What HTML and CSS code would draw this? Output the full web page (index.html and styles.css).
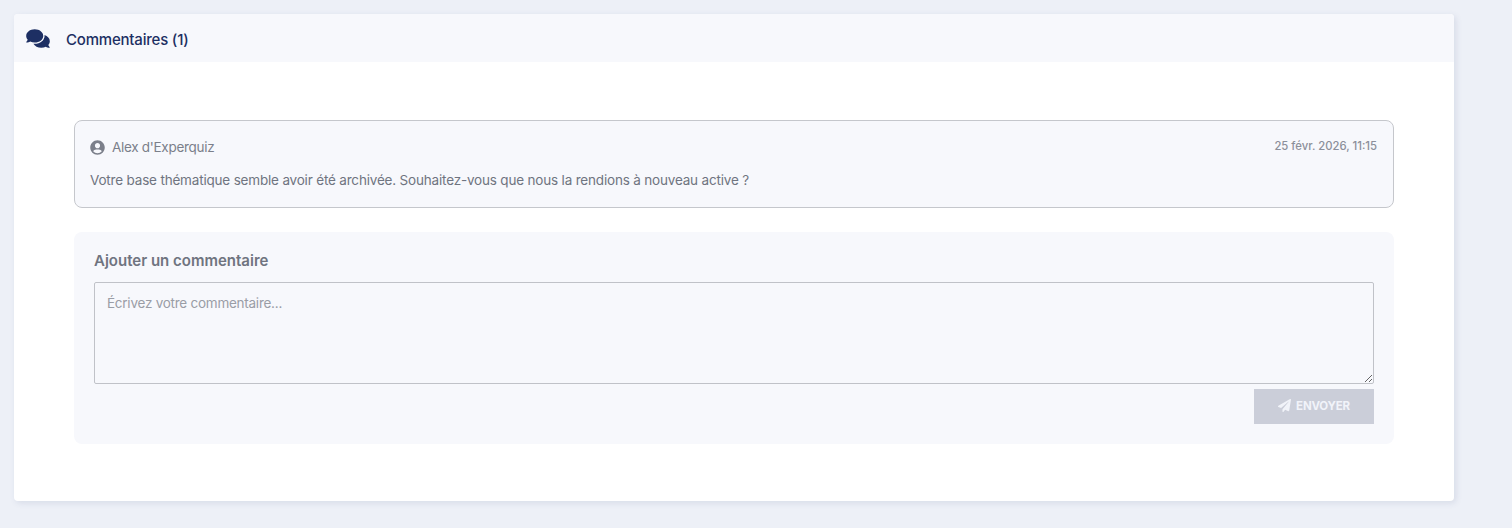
FILE: index.html
```html
<!DOCTYPE html>
<html lang="fr">
<head>
<meta charset="utf-8">
<title>Commentaires</title>
<link rel="stylesheet" href="styles.css">
</head>
<body>
<section class="card">
  <header class="card-head">
    <svg class="icon-comments" viewBox="0 0 576 512"><path d="M416 192c0-88.4-93.1-160-208-160S0 103.6 0 192c0 34.3 14.1 65.9 38 92-13.4 30.2-35.5 54.2-35.8 54.5-2.2 2.3-2.8 5.7-1.5 8.7S4.8 352 8 352c36.6 0 66.9-12.3 88.7-25 32.2 15.7 70.3 25 111.3 25 114.9 0 208-71.6 208-160zm122 220c23.9-26 38-57.7 38-92 0-66.9-53.5-124.2-129.3-148.1.9 6.6 1.3 13.3 1.3 20.1 0 105.9-107.7 192-240 192-10.8 0-21.3-.8-31.7-1.9C207.8 439.6 281.8 480 368 480c41 0 79.1-9.2 111.3-25 21.8 12.7 52.1 25 88.7 25 3.2 0 6.1-1.9 7.3-4.8 1.3-2.9.7-6.3-1.5-8.7-.3-.3-22.4-24.2-35.8-54.5z"/></svg>
    <h2 class="card-title">Commentaires (1)</h2>
  </header>
  <div class="card-body">
    <article class="comment">
      <div class="comment-meta">
        <span class="author">
          <svg class="icon-user" viewBox="0 0 496 512"><path d="M248 8C111 8 0 119 0 256s111 248 248 248 248-111 248-248S385 8 248 8zm0 96c48.6 0 88 39.4 88 88s-39.4 88-88 88-88-39.4-88-88 39.4-88 88-88zm0 344c-58.7 0-111.3-26.6-146.5-68.2 18.8-35.4 55.6-59.8 98.5-59.8 2.4 0 4.8.4 7.1 1.1 13 4.2 26.6 6.9 40.9 6.9 14.3 0 28-2.7 40.9-6.9 2.3-.7 4.7-1.1 7.1-1.1 42.9 0 79.7 24.4 98.5 59.8C359.3 421.4 306.7 448 248 448z"/></svg>
          Alex d'Experquiz
        </span>
        <time class="date">25 févr. 2026, 11:15</time>
      </div>
      <p class="comment-text">Votre base thématique semble avoir été archivée. Souhaitez-vous que nous la rendions à nouveau active ?</p>
    </article>
    <form class="add-form">
      <h3 class="add-title">Ajouter un commentaire</h3>
      <textarea class="add-input" placeholder="Écrivez votre commentaire..."></textarea>
      <div class="add-actions">
        <button class="send" type="button" disabled>
          <svg class="icon-send" viewBox="0 0 512 512"><path d="M476 3.2L12.5 270.6c-18.1 10.4-15.8 35.6 2.2 43.2L121 358.4l287.3-253.2c5.5-4.9 13.3 2.6 8.6 8.3L176 407v80.5c0 23.6 28.5 32.9 42.5 15.8L282 426l124.6 52.2c14.2 6 30.4-2.9 33-18.2l72-432C515 7.8 493.3-6.8 476 3.2z"/></svg>
          <span class="send-label">ENVOYER</span>
        </button>
      </div>
    </form>
  </div>
</section>
</body>
</html>
```
FILE: styles.css
```css
* { box-sizing: border-box; }
html, body { height: 100%; }
body {
  margin: 0;
  padding: 14px 58px 27px 14px;
  background: #edf0f7;
  font-family: Inter, "Liberation Sans", sans-serif;
  color: #6f7480;
  overflow: hidden;
}
.card {
  background: #fff;
  border-radius: 4px;
  box-shadow: 2px 2px 6px rgba(60, 75, 120, 0.12);
  height: 487px;
  overflow: hidden;
}
.card-head {
  height: 48px;
  background: #f7f8fc;
  display: flex;
  align-items: center;
  padding: 1px 0 0 12px;
}
.icon-comments { width: 24px; height: 21px; fill: #1d2f63; }
.card-title {
  margin: 2px 0 0 16px;
  font-size: 15px;
  letter-spacing: -0.2px;
  font-weight: 500;
  color: #1d2f63;
}
.card-body { padding: 58px 60px 0; }
.comment {
  height: 88px;
  background: #f7f8fc;
  border: 1px solid #c5c7cc;
  border-radius: 8px;
  padding: 16px 16px 0 15px;
}
.comment-meta { display: flex; justify-content: space-between; align-items: flex-start; }
.author { display: flex; align-items: center; gap: 7px; font-size: 13.5px; letter-spacing: -0.3px; color: #7b7f8a; line-height: 20px; }
.icon-user { width: 15px; height: 15px; fill: #7b7f8a; }
.date { font-size: 11.3px; font-weight: 500; color: #8b8f9a; line-height: 18px; }
.comment-text { margin: 13px 0 0; font-size: 13.5px; letter-spacing: -0.185px; line-height: 20px; color: #6f7480; }
.add-form {
  height: 212px;
  margin-top: 24px;
  background: #f7f8fc;
  border-radius: 8px;
  padding: 19px 20px 0;
}
.add-title { margin: 0; font-size: 15px; font-weight: 600; line-height: 20px; color: #6f7480; }
.add-input {
  display: block;
  width: 100%;
  height: 102px;
  margin-top: 11px;
  padding: 10px 12px;
  background: #f7f8fc;
  border: 1px solid #c0c2c8;
  border-radius: 2px;
  font: 13.5px/20px Inter, "Liberation Sans", sans-serif;
  letter-spacing: -0.25px;
}
.add-input::placeholder { color: #9a9da6; opacity: 1; }
.add-actions { display: flex; justify-content: flex-end; margin-top: 5px; }
.send {
  width: 120px;
  height: 35px;
  display: flex;
  align-items: center;
  justify-content: center;
  gap: 5px;
  padding: 0 0 2px;
  border: 0;
  background: #cbced9;
  color: #f1f3f9;
  font: 700 11.5px Inter, "Liberation Sans", sans-serif;
  letter-spacing: -0.2px;
}
.icon-send { width: 13px; height: 13px; fill: #f1f3f9; }
```
